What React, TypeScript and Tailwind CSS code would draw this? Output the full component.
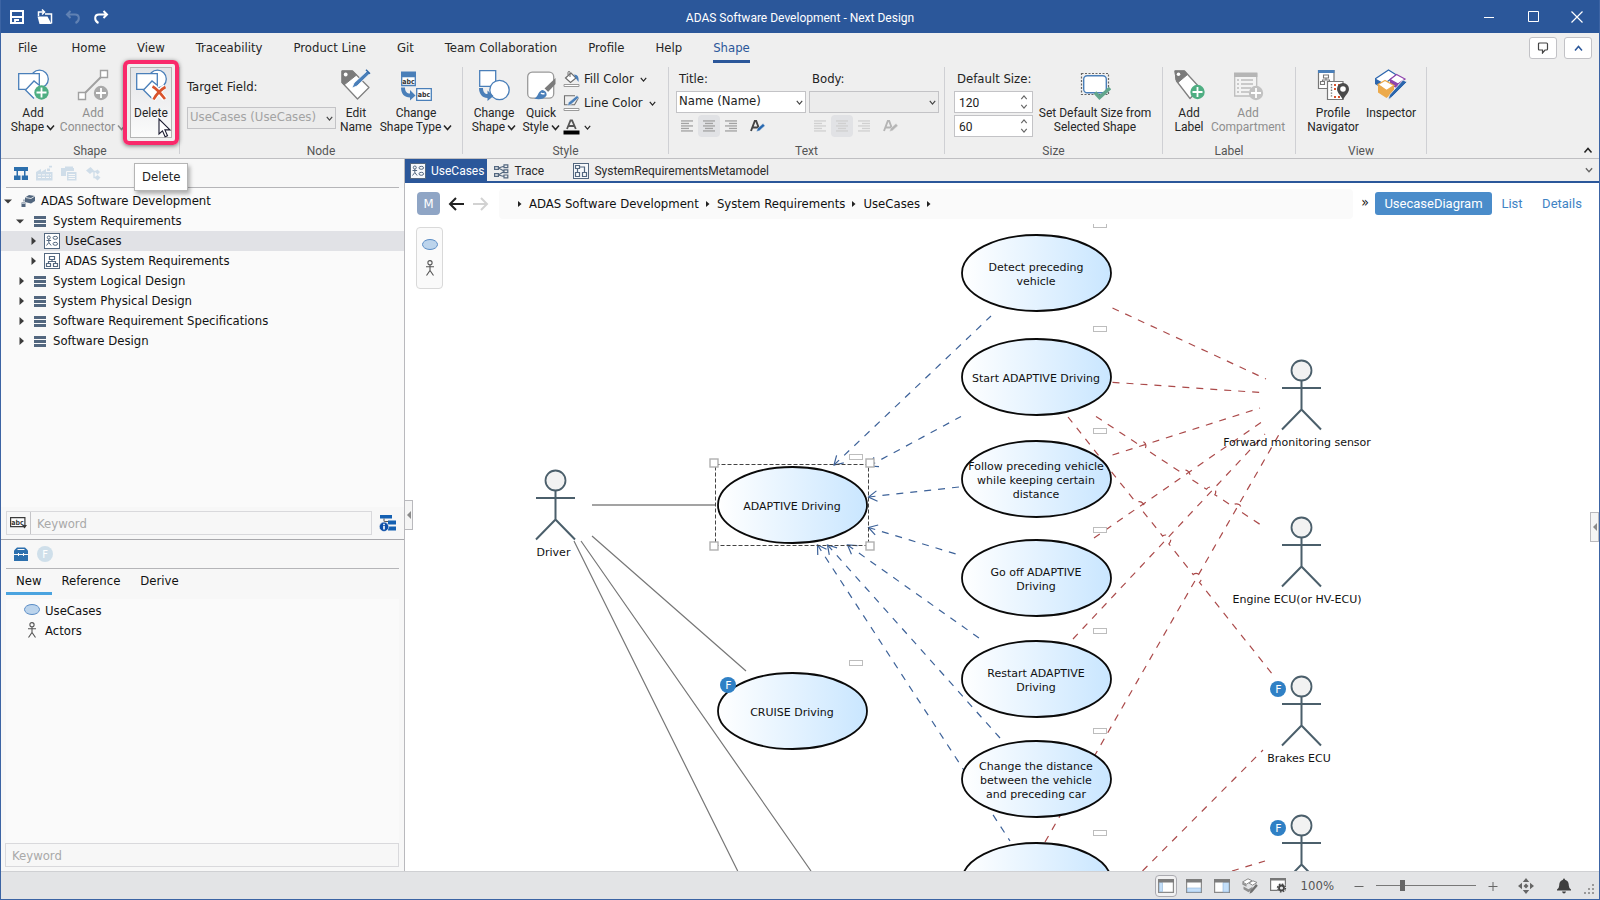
import React from "react";

const BLUE = "#4a7fb9";

/* ---------- small glyphs ---------- */

function Chevron({ up = false, className = "" }: { up?: boolean; className?: string }) {
  return (
    <svg width="9" height="9" viewBox="0 0 9 9" className={className} fill="none" stroke="currentColor" strokeWidth="1.5" aria-hidden="true">
      <path d={up ? "M1 6.5 4.5 2.5 8 6.5" : "M1 2.5 4.5 6.5 8 2.5"} />
    </svg>
  );
}

function PlusBadge({ x, y, color }: { x: number; y: number; color: string }) {
  return (
    <g>
      <circle cx={x} cy={y} r="7.2" fill={color} />
      <path d={`M${x - 5} ${y}h10M${x} ${y - 5}v10`} stroke="#fff" strokeWidth="1.8" />
    </g>
  );
}

function Icon32({ children }: { children: React.ReactNode }) {
  return (
    <svg width="32" height="32" viewBox="0 0 32 32" fill="none" className="shrink-0" aria-hidden="true">
      {children}
    </svg>
  );
}

function Shapes() {
  return (
    <g stroke={BLUE} strokeWidth="1.3" fill="#fff">
      <circle cx="22.5" cy="10" r="8.8" />
      <path d="M1.7 4.7h20.6v15.6H1.7z" />
      <path d="M8.5 20.5 17 12l8.5 8.5L17 29z" stroke="none" />
      <path d="M22 16 17 12 8.5 21 17 29.5" fill="none" />
    </g>
  );
}

function AddShapeIcon() {
  return (
    <Icon32>
      <Shapes />
      <PlusBadge x={24.5} y={23.5} color="#4fae82" />
    </Icon32>
  );
}

function DeleteIcon() {
  return (
    <Icon32>
      <Shapes />
      <path d="M18 18c3 2 9 9 12 12M30 17.5c-4 3-9 8-12 13" stroke="#fff" strokeWidth="5" />
      <path d="M17.5 17.5c4 2 9 8 12.5 12.5M30.5 18c-4.5 2.5-9 7-12 12.5" stroke="#d9532c" strokeWidth="2.6" />
    </Icon32>
  );
}

function AddConnectorIcon() {
  return (
    <Icon32>
      <g stroke="#a0a0a0" strokeWidth="1.4">
        <path d="M8.5 23.5 23.5 8.5" strokeWidth="2" />
        <path d="M1.5 23.5h7v7h-7zM23.5 1.5h7v7h-7z" fill="#fff" />
      </g>
      <PlusBadge x={24} y={24} color="#a9a9a9" />
    </Icon32>
  );
}

function EditNameIcon() {
  return (
    <Icon32>
      <path d="M2 2h10.5L29 18.5 17.5 30 2 13.5z" fill="#fff" stroke="#808080" strokeWidth="1.3" strokeLinejoin="round" />
      <path d="M2 2h10.5l4 4L4 16l-2-2.5z" fill="#7b7b7b" stroke="#7b7b7b" strokeLinejoin="round" />
      <circle cx="5.7" cy="5.5" r="1.9" fill="#fff" />
      <path d="M12 19l2-5L27.5 1.5l2.5 3L17 17z" fill={BLUE} stroke="#fff" strokeWidth=".8" />
      <path d="M26 .8l4 4" stroke="#2f66a5" strokeWidth="1.4" />
    </Icon32>
  );
}

function ChangeShapeTypeIcon() {
  return (
    <Icon32>
      <path d="M1 2.5h15v5H1z" fill={BLUE} />
      <path d="M1.7 7.5h13.6v9H1.7z" fill="#fff" stroke={BLUE} strokeWidth="1.3" />
      <path d="M16.7 19.7h14.6v11.6H16.7z" fill="#fff" stroke={BLUE} strokeWidth="1.3" />
      <text x="8.5" y="14.5" fontSize="7" fontWeight="700" fill="#333" textAnchor="middle">abc</text>
      <text x="24" y="27.8" fontSize="7" fontWeight="700" fill="#333" textAnchor="middle">abc</text>
      <path d="M1 18.5h4c0 4 2 6 5 6v-3.5l5.5 5.5-5.5 5v-3C4.5 28.5 1 25 1 18.5z" fill={BLUE} />
    </Icon32>
  );
}

function ChangeShapeIcon() {
  return (
    <Icon32>
      <path d="M1.7 1.7h16v15.6h-16z" fill="#fff" stroke={BLUE} strokeWidth="1.3" />
      <circle cx="21.5" cy="21" r="9.7" fill="#fff" stroke={BLUE} strokeWidth="1.3" />
      <path d="M1 19h4c0 4 2 6 4.5 6v-3.5L15.5 27 9.5 32v-3C4.5 29 1 25 1 19z" fill={BLUE} />
    </Icon32>
  );
}

function QuickStyleIcon() {
  return (
    <Icon32>
      <rect x="2.7" y="3.2" width="26" height="26" rx="4.5" fill="#fff" stroke="#9a9a9a" strokeWidth="1.3" />
      <path d="M30.5 9v6L23 23l-3.5-3.5z" fill="#7b7b7b" />
      <path d="M19 20l3.5 3.5" stroke="#fff" strokeWidth="1.2" />
      <path d="M9 29.5c4-1 3.5-6.5 8-8.5 3.5.5 5 3 4.5 5.5-2.5 4-8 4.5-12.5 3z" fill={BLUE} />
      <path d="M16 24c1 1 2 1 3.5.5" stroke="#fff" strokeWidth="1.5" />
    </Icon32>
  );
}

function SetSizeIcon() {
  return (
    <Icon32>
      <path d="M2.5 4.5h27v21h-27z" stroke="#666" strokeWidth="1.2" strokeDasharray="2 1.5" />
      <rect x="4.7" y="6.7" width="22.6" height="17" rx="3.5" fill="#fff" stroke={BLUE} strokeWidth="1.4" />
      <path d="M16 23.5l4.5 5L31 19" stroke="#62a68c" strokeWidth="3.6" />
    </Icon32>
  );
}

function AddLabelIcon() {
  return (
    <Icon32>
      <path d="M2 2h9.5L27 19 17 29.5 3.5 12z" fill="#fff" stroke="#808080" strokeWidth="1.3" strokeLinejoin="round" />
      <path d="M2 2h9.5l3 3.5L5 13.5 3 11z" fill="#7b7b7b" stroke="#7b7b7b" strokeLinejoin="round" />
      <circle cx="5.5" cy="5.2" r="1.8" fill="#fff" />
      <PlusBadge x={24.5} y={23} color="#4fae82" />
    </Icon32>
  );
}

function AddCompartmentIcon() {
  return (
    <Icon32>
      <path d="M2.7 5h22v22h-22z" fill="#f3f3f3" stroke="#bdbdbd" strokeWidth="1.3" />
      <path d="M2 3.5h23.4V8H2z" fill="#b5b5b5" />
      <path d="M5 11h2M5 15h2M5 19h2M5 23h2M9 11h12M9 15h12M9 19h10M9 23h8" stroke="#bdbdbd" strokeWidth="1.4" />
      <PlusBadge x={24} y={24} color="#c2c2c2" />
    </Icon32>
  );
}

function ProfileNavigatorIcon() {
  return (
    <Icon32>
      <path d="M1.5 1.5h15.5v18H1.5z" fill="#fff" stroke="#777" strokeWidth="1.2" />
      <path d="M1 1h16.5v3H1z" fill={BLUE} />
      <path d="M6.5 6h5v3h-5zM3.5 12.5h4v3h-4zM10.5 12.5h4v3h-4zM9 9v2M5.5 12.5V11h7v1.5" stroke="#777" strokeWidth="1.1" />
      <path d="M10.5 12.5h15.5v18H10.5z" fill="#fff" stroke="#777" strokeWidth="1.2" />
      <path d="M14.5 15v14" stroke="#777" strokeWidth="1.4" strokeDasharray="1.4 1.4" />
      <path d="M18 15v2M18 19v2M18 27v2M22 15v2M22 27v2" stroke="#d9532c" strokeWidth="2" />
      <path d="M26 14a6 6 0 0 1 6 6c0 4-4.5 7-6 11-1.5-4-6-7-6-11a6 6 0 0 1 6-6z" fill="#4a4a4a" />
      <circle cx="26" cy="20" r="2.8" fill="#fff" />
    </Icon32>
  );
}

function InspectorIcon() {
  return (
    <Icon32>
      <path d="M0 10 13.5 1l8 5L9 15z" fill="#fff" stroke="#2c66ad" strokeWidth="1.2" />
      <path d="M0 10l9 5.5v5L0 15z" fill="#2c66ad" />
      <path d="M15 10.5 21.5 5.5l8.5 4.5-7 5z" fill="#fff" stroke="#8e44ad" strokeWidth="1.2" />
      <path d="M15 10.5l8 4.5v5l-8-4.5z" fill="#8e44ad" />
      <path d="M3 15.5l7-4 9 5-7.5 5z" fill="#fff" stroke="#ecaa4c" strokeWidth="1.2" />
      <path d="M3 15.5l8.500 6 7.5-5V23l-7.5 6L3 23.5z" fill="#ecaa4c" />
      <path d="M28 11l4 2-15 15-4 3 1.5-5z" fill="#2c66ad" stroke="#efefef" strokeWidth=".8" />
    </Icon32>
  );
}

function PenLetter({ muted = false }: { muted?: boolean }) {
  return (
    <svg width="16" height="14" viewBox="0 0 16 14" aria-hidden="true">
      <path d="M1 12 4.8 2h1.4L9.5 11M2.5 8.5h5.5" stroke={muted ? "#b5b5b5" : "#444"} strokeWidth="1.9" fill="none" />
      <path d="M6.5 12.5l1-3 5.5-5 2 2.2-5.5 5z" fill={muted ? "#b5b5b5" : "#2768b0"} stroke="#efefef" strokeWidth=".5" />
    </svg>
  );
}

function AlignGlyph({ kind, muted }: { kind: "left" | "center" | "right"; muted?: boolean }) {
  const rows = [12, 8, 12, 8, 12];
  return (
    <svg width="12" height="12" viewBox="0 0 12 12" aria-hidden="true">
      {rows.map((w, i) => (
        <rect key={i} x={kind === "left" ? 0 : kind === "center" ? (12 - w) / 2 : 12 - w} y={i * 2.5 + 0.3} width={w} height="1.3" fill={muted ? "#d0d0d0" : "#a2a2a2"} />
      ))}
    </svg>
  );
}

function UseCaseDocIcon({ light = false }: { light?: boolean }) {
  return (
    <svg width="16" height="16" viewBox="0 0 16 16" fill="none" stroke="#53677f" strokeWidth="1" className="shrink-0" aria-hidden="true">
      <rect x=".5" y=".5" width="15" height="15" fill={light ? "#fff" : "#f7f9fb"} />
      <circle cx="4.8" cy="4.5" r="1.5" />
      <path d="M4.8 6v3.5M2.5 7.5h4.6M2.5 12.5l2.3-3 2.3 3" />
      <ellipse cx="11.3" cy="4.8" rx="2.3" ry="1.5" />
      <ellipse cx="11.3" cy="10.8" rx="2.3" ry="1.5" />
    </svg>
  );
}

function ModelDocIcon() {
  return (
    <svg width="16" height="16" viewBox="0 0 16 16" fill="none" stroke="#53677f" strokeWidth="1" aria-hidden="true">
      <rect x=".5" y=".5" width="15" height="15" fill="#fff" />
      <path d="M5.5 3.5h5v3h-5zM2.5 10.5h4v3h-4zM9.5 10.5h4v3h-4zM8 6.5v2M4.5 10.5v-2h7v2" strokeWidth="1.2" />
    </svg>
  );
}

function MetamodelDocIcon() {
  return (
    <svg width="16" height="16" viewBox="0 0 16 16" fill="none" stroke="#53677f" strokeWidth="1" aria-hidden="true">
      <rect x=".5" y=".5" width="15" height="15" fill="#f7f9fb" />
      <path d="M2.5 2.5h4v3h-4zM2.5 9.5h4v4h-4zM9.5 9.5h4v4h-4zM4.5 5.5v4M6.5 4h5v5.5" strokeWidth="1.2" />
    </svg>
  );
}

function TraceDocIcon() {
  return (
    <svg width="15" height="15" viewBox="0 0 15 15" fill="none" stroke="#53677f" strokeWidth="1.2" aria-hidden="true">
      <path d="M.6 2.6h3.8v2.8H.6zM.6 9.600h3.8v2.8H.6zM10 .8h3.8v2.8H10zM10 5.8h3.8v2.8H10zM10 11h3.8v2.8H10zM4.4 4 10 7M4.4 4 10 2.2M4.4 11 10 7.5M4.4 11l5.600 1.5" />
    </svg>
  );
}

function Bars() {
  return (
    <svg width="12" height="12" viewBox="0 0 12 12" fill="#53677f" aria-hidden="true">
      <path d="M0 1h12v3H0zM0 5h12v3H0zM0 9h12v3H0z" />
    </svg>
  );
}

function ProjectIcon() {
  return (
    <svg width="16" height="16" viewBox="0 0 16 16" aria-hidden="true">
      <path d="M5 4.500 9 2l6 1v5l-4 2.500L5 9z" fill="#53677f" />
      <path d="M5.500 4.500 11 5.500 15 3" stroke="#fff" strokeWidth=".8" fill="none" />
      <path d="M1.500 9.500h4V14h-4z" fill="#53677f" />
      <path d="M1.500 10.500h4" stroke="#cfd6de" strokeWidth=".8" />
      <path d="M4 8.500V6.500" stroke="#53677f" />
    </svg>
  );
}

function OvalGlyph() {
  return (
    <svg width="16" height="16" viewBox="0 0 16 16" aria-hidden="true">
      <ellipse cx="8" cy="7.5" rx="7.5" ry="5" fill="#bcd4ec" stroke="#5a8cc5" />
    </svg>
  );
}

function ActorGlyph() {
  return (
    <svg width="16" height="16" viewBox="0 0 16 16" fill="none" stroke="#555" strokeWidth="1.1" aria-hidden="true">
      <circle cx="8" cy="2.7" r="2.1" />
      <path d="M8 5v5.5M4 6.7h8M4.5 15.5l3.5-5 3.5 5" />
    </svg>
  );
}

/* ---------- ribbon ---------- */

function RibbonButton(props: {
  icon: React.ReactNode;
  lines: string[];
  width: string;
  menu?: boolean;
  disabled?: boolean;
  className?: string;
  children?: React.ReactNode;
}) {
  const { icon, lines, width, menu, disabled, className = "", children } = props;
  return (
    <button
      type="button"
      disabled={disabled}
      className={`relative flex shrink-0 flex-col items-center whitespace-nowrap ${width} ${disabled ? "text-[#8e8e8e]" : "text-[#262626]"} ${className}`}
    >
      {icon}
      <span className="mt-[5px] flex flex-col items-center font-[Roboto,sans-serif] text-[12px] leading-[14px]">
        {lines.map((l, i) => (
          <span key={l} className="flex items-center gap-0.5">
            {l}
            {menu && i === lines.length - 1 && <Chevron />}
          </span>
        ))}
      </span>
      {children}
    </button>
  );
}

function Group({ title, width, children }: { title: string; width: string; children: React.ReactNode }) {
  return (
    <>
      <section aria-label={title} className={`flex shrink-0 flex-col ${width}`}>
        <div className="flex h-[77px] items-start">{children}</div>
        <div className="text-center font-[Roboto,sans-serif] text-[12px] leading-[14px] text-[#555]">{title}</div>
      </section>
      <div className="h-[87px] w-px shrink-0 bg-[#cfd0d4]" />
    </>
  );
}

function Combo({ id, value, disabled, className }: { id: string; value: string; disabled?: boolean; className: string }) {
  return (
    <div className={`relative h-[22px] ${className}`}>
      <select
        id={id}
        disabled={disabled}
        className={`block h-full w-full appearance-none border border-[#c3c3c6] pr-4 pb-[3px] pl-0.5 text-[13px] leading-[17px] opacity-100 ${disabled ? "bg-[#ececec] text-[#a3a3a3]" : "bg-white text-[#1e1e1e]"}`}
      >
        <option>{value}</option>
      </select>
      <Chevron className="pointer-events-none absolute top-[8px] right-[3px] h-[7px] w-[7px] text-[#444]" />
    </div>
  );
}

function AlignRow({ muted, label }: { muted?: boolean; label: string }) {
  return (
    <div className="mt-0.5 flex">
      {(["left", "center", "right"] as const).map((k) => (
        <button
          key={k}
          type="button"
          aria-label={`${label} align ${k}`}
          className={`flex h-[22px] w-[22px] items-center justify-center rounded-sm ${k === "center" ? "bg-[#e1e2e5]" : ""}`}
        >
          <AlignGlyph kind={k} muted={muted} />
        </button>
      ))}
      <button type="button" aria-label={`${label} font`} className="ml-1 flex h-[22px] w-6 items-center justify-center">
        <PenLetter muted={muted} />
      </button>
    </div>
  );
}

function Spin({ id, value, label }: { id: string; value: string; label: string }) {
  return (
    <div className="mb-0.5 flex h-[22px] w-[79px] border border-[#c3c3c6] bg-white">
      <input id={id} aria-label={label} defaultValue={value} className="w-0 flex-1 pt-0.5 pl-1 font-[Roboto,sans-serif] text-[12px] text-[#222] outline-none" />
      <span className="flex w-4 flex-col items-center justify-between py-0.5 text-[#666]">
        <button type="button" aria-label={`Increase ${label}`}><Chevron up className="h-[7px] w-2" /></button>
        <button type="button" aria-label={`Decrease ${label}`}><Chevron className="h-[7px] w-2" /></button>
      </span>
    </div>
  );
}

function Ribbon() {
  return (
    <div className="relative flex h-24 shrink-0 border-b border-[#bfbfc2] pt-1">
      <Group title="Shape" width="w-[178px]">
        <RibbonButton icon={<AddShapeIcon />} lines={["Add", "Shape"]} menu width="w-[54px]" className="ml-[5px] pt-0.5" />
        <RibbonButton icon={<AddConnectorIcon />} lines={["Add", "Connector"]} menu disabled width="w-[66px]" className="pt-0.5" />
        <RibbonButton
          icon={<DeleteIcon />}
          lines={["Delete"]}
          width="w-[42px]"
          className="ml-1 h-[71px] border border-[#b4b4b4] bg-gradient-to-b from-[#e4e5e8] to-[#fbfbfb] pt-px"
        >
          <span className="pointer-events-none absolute -top-2 -right-2 -bottom-2 -left-2 rounded-md border-4 border-[#f9296b] shadow-[0_1px_4px_rgba(0,0,0,0.5)]" />
          <svg width="14" height="20" viewBox="0 0 14 20" className="absolute top-[50px] left-[27px]" aria-hidden="true">
            <path d="M1 1v15l3.5-3.2 2.6 5.9 2.4-1-2.6-5.8H12z" fill="#fff" stroke="#1b1b30" strokeWidth="1.1" />
          </svg>
        </RibbonButton>
      </Group>

      <Group title="Node" width="w-[282px]">
        <div className="ml-[7px] flex w-[149px] shrink-0 flex-col">
          <label htmlFor="target" className="flex h-10 items-center text-[13px] text-[#222]">Target Field:</label>
          <Combo id="target" value="UseCases (UseCases)" disabled className="w-full" />
        </div>
        <RibbonButton icon={<EditNameIcon />} lines={["Edit", "Name"]} width="w-[40px]" className="pt-0.5" />
        <RibbonButton icon={<ChangeShapeTypeIcon />} lines={["Change", "Shape Type"]} menu width="w-[80px]" className="pt-0.5" />
      </Group>

      <Group title="Style" width="w-[205px]">
        <RibbonButton icon={<ChangeShapeIcon />} lines={["Change", "Shape"]} menu width="w-[50px]" className="ml-1.5 pt-0.5" />
        <RibbonButton icon={<QuickStyleIcon />} lines={["Quick", "Style"]} menu width="w-[44px]" className="pt-0.5" />
        <div className="flex flex-col text-[13px] text-[#222]">
          <button type="button" className="flex h-6 items-center gap-1">
            <svg width="17" height="16" viewBox="0 0 17 16" aria-hidden="true">
              <path d="M2.5 7 8 2l5 5-5.5 4.5z" fill="#fff" stroke="#6e6e6e" strokeWidth="1.2" />
              <path d="M7 6V1.5C7 0 5 0 5 1.5V4" fill="none" stroke="#6e6e6e" />
              <path d="M11 3.5c4 0 5 3 4.5 7.5L13 7.5z" fill={BLUE} />
              <path d="M1 13.5h15v2H1z" fill="#fff" stroke="#9a9a9a" />
            </svg>
            Fill Color
            <Chevron className="ml-0.5 h-[7px] w-[7px]" />
          </button>
          <button type="button" className="flex h-6 items-center gap-1">
            <svg width="17" height="16" viewBox="0 0 17 16" aria-hidden="true">
              <path d="M12 .8H1.5v9h10l4-7" fill="none" stroke="#6e6e6e" strokeWidth="1.1" />
              <path d="M4.5 11l1-3.5L14 .5l2 2-8 7z" fill={BLUE} stroke="#efefef" strokeWidth=".6" />
              <path d="M1 13.5h15v2H1z" fill="#fff" stroke="#9a9a9a" />
            </svg>
            Line Color
            <Chevron className="ml-0.5 h-[7px] w-[7px]" />
          </button>
          <button type="button" aria-label="Font color" className="flex h-6 items-center gap-1">
            <svg width="17" height="16" viewBox="0 0 17 16" aria-hidden="true">
              <path d="M4 10 7.5 1.5h1.6L12.8 10M5.5 7h5.5" stroke="#555" strokeWidth="1.8" fill="none" />
              <path d="M.5 11.5h16v4H.5z" fill="#000" />
            </svg>
            <Chevron className="h-[7px] w-[7px]" />
          </button>
        </div>
      </Group>

      <Group title="Text" width="w-[275px]">
        <div className="ml-[7px] flex w-[130px] flex-col">
          <label htmlFor="title" className="flex h-6 items-center pl-[3px] text-[13px] text-[#222]">Title:</label>
          <Combo id="title" value="Name (Name)" className="w-full" />
          <AlignRow label="Title" />
        </div>
        <div className="ml-[3px] flex w-[130px] flex-col">
          <label htmlFor="body" className="flex h-6 items-center pl-[3px] text-[13px] text-[#222]">Body:</label>
          <Combo id="body" value="" disabled className="w-full" />
          <AlignRow label="Body" muted />
        </div>
      </Group>

      <Group title="Size" width="w-[217px]">
        <div className="ml-[9px] flex flex-col">
          <label htmlFor="size-w" className="flex h-6 items-center pl-[3px] text-[13px] whitespace-nowrap text-[#222]">Default Size:</label>
          <Spin id="size-w" label="Default width" value="120" />
          <Spin id="size-h" label="Default height" value="60" />
        </div>
        <RibbonButton icon={<SetSizeIcon />} lines={["Set Default Size from", "Selected Shape"]} width="w-[124px]" className="pt-0.5" />
      </Group>

      <Group title="Label" width="w-[132px]">
        <RibbonButton icon={<AddLabelIcon />} lines={["Add", "Label"]} width="w-[38px]" className="ml-[7px] pt-0.5" />
        <RibbonButton icon={<AddCompartmentIcon />} lines={["Add", "Compartment"]} disabled width="w-[80px]" className="pt-0.5" />
      </Group>

      <Group title="View" width="w-[130px]">
        <RibbonButton icon={<ProfileNavigatorIcon />} lines={["Profile", "Navigator"]} width="w-[64px]" className="ml-[5px] pt-0.5" />
        <RibbonButton icon={<InspectorIcon />} lines={["Inspector"]} width="w-[52px]" className="pt-0.5" />
      </Group>

      <button type="button" aria-label="Collapse ribbon" className="mt-auto mr-1.5 mb-[3px] ml-auto text-[#222]">
        <Chevron up className="h-[9px] w-2.5" />
      </button>
    </div>
  );
}

/* ---------- left panel ---------- */

type TreeNode = { text: string; level: number; open?: boolean; icon: React.ReactNode; selected?: boolean };
const TREE: TreeNode[] = [
  { text: "ADAS Software Development", level: 0, open: true, icon: <ProjectIcon /> },
  { text: "System Requirements", level: 1, open: true, icon: <Bars /> },
  { text: "UseCases", level: 2, icon: <UseCaseDocIcon light />, selected: true },
  { text: "ADAS System Requirements", level: 2, icon: <ModelDocIcon /> },
  { text: "System Logical Design", level: 1, icon: <Bars /> },
  { text: "System Physical Design", level: 1, icon: <Bars /> },
  { text: "Software Requirement Specifications", level: 1, icon: <Bars /> },
  { text: "Software Design", level: 1, icon: <Bars /> },
];
const INDENT = ["pl-0", "pl-3", "pl-6"];

function LeftPanel() {
  return (
    <aside className="flex w-[404px] shrink-0 flex-col border-r border-[#b9b9bd] bg-[#f7f7f7]">
      <div className="flex min-h-0 flex-[383] flex-col border-b border-[#a8a8ac]">
        <div className="mr-[5px] ml-[5px] flex h-[29px] shrink-0 items-center gap-2 border-b border-[#b5b5b8] pl-2">
          <button type="button" aria-label="Model tree">
            <svg width="14" height="13" viewBox="0 0 14 13" fill="#2c6fad" aria-hidden="true">
              <path d="M0 0h14v4H0zM2.5 4h1.5v5H2.5zM10 4h1.5v5H10zM0 8.5h6.5V13H0zM7.8 8.5H14V13H7.8z" />
            </svg>
          </button>
          <button type="button" aria-label="Product line">
            <svg width="17" height="16" viewBox="0 0 17 16" fill="#cfdde9" aria-hidden="true">
              <path d="M0 15.5V7l5-3v3l5-3v3h6.5v8.5zM11 3.5h3V6h-3zM13 .8h3V2.5h-3z" />
              <path d="M2 9.8h13M2 12.5h13" stroke="#f7f7f7" strokeDasharray="3 1" />
            </svg>
          </button>
          <button type="button" aria-label="Views">
            <svg width="16" height="15" viewBox="0 0 16 15" fill="#cfdde9" aria-hidden="true">
              <path d="M0 2h4V.5h8V2h1v8H0z" />
              <path d="M5.5 5.5H16V15H5.5z" stroke="#f7f7f7" />
              <path d="M7.5 8.5H14M7.5 10.5H14M7.5 12.5H14" stroke="#f7f7f7" />
            </svg>
          </button>
          <button type="button" aria-label="Relations" className="ml-px">
            <svg width="15" height="15" viewBox="0 0 15 15" fill="#cfdde9" aria-hidden="true">
              <path d="M0 4.500 4.500 1 8 4.500 4 8zM9 5.500l2.500-2L14 6l-2.500 2.500zM8.500 11.500l3-2.500 3 2.500-3 3z" />
              <path d="M6 5.500h5M8 5.500v6h3" stroke="#cfdde9" fill="none" strokeWidth="1.3" />
            </svg>
          </button>
        </div>
        <ul className="min-h-0 flex-1 overflow-hidden bg-[#fafafa] pt-[3px] text-[13px] text-[#111]">
          {TREE.map((n) => (
            <li key={n.text} className={`flex h-5 items-center gap-[5px] ${INDENT[n.level]} ${n.selected ? "bg-[#e1e2e6]" : ""}`}>
              <button type="button" aria-label={n.open ? "Collapse" : "Expand"} className="flex w-3.5 justify-center">
                <svg width="10" height="8" viewBox="0 0 10 8" fill="#3c3c3c" aria-hidden="true">
                  <path d={n.open ? "M1 2.5h8L5 6.500z" : "M4.500 0v8l4.500-4z"} />
                </svg>
              </button>
              <span className="flex w-4 justify-center">{n.icon}</span>
              <span>{n.text}</span>
            </li>
          ))}
        </ul>
        <div className="flex h-8 shrink-0 items-center px-[5px]">
          <div className="flex h-6 flex-1 items-center border border-[#d9d9dc]">
            <button type="button" aria-label="Search mode" className="flex h-full w-6 items-center justify-center border-r border-[#c5c5c8]">
              <svg width="17" height="12" viewBox="0 0 17 12" aria-hidden="true">
                <path d="M.6.6h14.300v9H.6z" fill="#fff" stroke="#3a3a3a" strokeWidth="1.2" />
                <text x="7.6" y="7.5" fontSize="7" fontWeight="700" fill="#3a3a3a" textAnchor="middle">abc</text>
                <path d="M12 8h5l-2.5 3.500z" fill="#3a3a3a" />
              </svg>
            </button>
            <input aria-label="Search tree" placeholder="Keyword" className="h-full flex-1 px-1.5 text-[13px] outline-none placeholder:text-[#a9a9a9]" />
          </div>
          <button type="button" aria-label="Filter settings" className="ml-[7px] mr-[3px]">
            <svg width="17" height="17" viewBox="0 0 17 17" aria-hidden="true">
              <path d="M1 0h12v3.500H1zM9 5.500h8v4H9zM9 11.500h8v4H9z" fill="#1460b2" />
              <path d="M5 3.500v3M5 6.500h4" stroke="#555" />
              <circle cx="5" cy="11.800" r="4.700" fill="#0d4fa8" stroke="#f7f7f7" strokeWidth=".6" />
              <path d="M5 8.800v1.500M5 11v3.500" stroke="#fff" strokeWidth="1.600" />
            </svg>
          </button>
        </div>
      </div>

      <div className="flex min-h-0 flex-[329] flex-col px-[5px] pb-1">
        <div className="flex h-[29px] shrink-0 items-center gap-[9px] border-b border-[#b5b5b8] pl-2">
          <button type="button" aria-label="Toolbox">
            <svg width="14" height="14" viewBox="0 0 14 14" aria-hidden="true">
              <path d="M3 .5h8l3 3V14H0V3.500z" fill="#2c6fad" />
              <path d="M3.500 2.500h7M0 7.500h14M4.500 6v3M9.500 6v3" stroke="#f7f7f7" />
            </svg>
          </button>
          <button type="button" aria-label="Feature" className="flex h-4 w-4 items-center justify-center rounded-full bg-[#cfdfea] text-[11px] leading-none text-white">F</button>
        </div>
        <div role="tablist" className="flex h-[26px] shrink-0 text-[13px] text-[#111]">
          <button type="button" role="tab" aria-selected="true" className="border-b-[3px] border-[#4aa3df] px-2.5">New</button>
          <button type="button" role="tab" aria-selected="false" className="border-b-[3px] border-transparent px-2.5">Reference</button>
          <button type="button" role="tab" aria-selected="false" className="border-b-[3px] border-transparent px-2.5">Derive</button>
        </div>
        <ul className="mt-1 min-h-0 flex-1 bg-[#fafafa] pt-px text-[13px] text-[#111]">
          <li className="flex h-5 items-center gap-[5px] pl-[18px]"><OvalGlyph />UseCases</li>
          <li className="flex h-5 items-center gap-[5px] pl-[18px]"><ActorGlyph />Actors</li>
        </ul>
        <input aria-label="Search toolbox" placeholder="Keyword" className="-ml-px h-6 shrink-0 border border-[#d9d9dc] px-1.5 text-[13px] outline-none placeholder:text-[#a9a9a9]" />
      </div>
    </aside>
  );
}

/* ---------- diagram ---------- */

const CASES: { x: number; y: number; lines: string[] }[] = [
  { x: 1036.5, y: 273, lines: ["Detect preceding", "vehicle"] },
  { x: 1036.5, y: 377, lines: ["Start ADAPTIVE Driving"] },
  { x: 1036.5, y: 479, lines: ["Follow preceding vehicle", "while keeping certain", "distance"] },
  { x: 1036.5, y: 578, lines: ["Go off ADAPTIVE", "Driving"] },
  { x: 1036.5, y: 679, lines: ["Restart ADAPTIVE", "Driving"] },
  { x: 1036.5, y: 779, lines: ["Change the distance", "between the vehicle", "and preceding car"] },
  { x: 1036.5, y: 881, lines: [] },
  { x: 792.5, y: 505, lines: ["ADAPTIVE Driving"] },
  { x: 792.5, y: 711, lines: ["CRUISE Driving"] },
];

const ACTORS = [
  { x: 555.5, y: 480.5, tx: 553.5, name: "Driver" },
  { x: 1301.5, y: 370.5, tx: 1297, name: "Forward monitoring sensor" },
  { x: 1301.5, y: 527.5, tx: 1297, name: "Engine ECU(or HV-ECU)" },
  { x: 1301.5, y: 686.5, tx: 1299, name: "Brakes ECU" },
  { x: 1301.5, y: 825.5, tx: 1299, name: "" },
];

type Seg = [number, number, number, number];
const ARROWS: Seg[] = [
  [991, 316, 834, 465],
  [961, 416.5, 869, 466],
  [959, 487, 868.5, 497],
  [956, 554, 868.5, 527.5],
  [979, 638, 847.5, 545],
  [1000, 738, 827.5, 545],
  [1010, 841, 817.5, 545],
];
const RED: Seg[] = [
  [1112.5, 308, 1266, 379],
  [1112.5, 382.3, 1260, 392.5],
  [1112.5, 455, 1260, 408],
  [1094, 538, 1266, 419],
  [1073, 639, 1265, 434],
  [1045, 842, 1281, 431],
  [1142.5, 871, 1263, 750],
  [1232, 871, 1265, 861],
];
/* these hop over every RED line they cross */
const HOPPING: Seg[] = [
  [1096, 416.5, 1264, 527],
  [1068, 417, 1273, 675],
];

function cross(a: Seg, b: Seg): number | null {
  const [x1, y1, x2, y2] = a;
  const [x3, y3, x4, y4] = b;
  const d = (x2 - x1) * (y4 - y3) - (y2 - y1) * (x4 - x3);
  if (Math.abs(d) < 1e-6) return null;
  const t = ((x3 - x1) * (y4 - y3) - (y3 - y1) * (x4 - x3)) / d;
  const u = ((x3 - x1) * (y2 - y1) - (y3 - y1) * (x2 - x1)) / d;
  return t > 0 && t < 1 && u > 0 && u < 1 ? t : null;
}

function hopPath(s: Seg): string {
  const [x1, y1, x2, y2] = s;
  const len = Math.hypot(x2 - x1, y2 - y1);
  const ux = (x2 - x1) / len;
  const uy = (y2 - y1) / len;
  const r = 5;
  const ts = RED.map((o) => cross(s, o)).filter((t): t is number => t !== null).sort((a, b) => a - b);
  let d = `M${x1} ${y1}`;
  for (const t of ts) {
    const cx = x1 + (x2 - x1) * t;
    const cy = y1 + (y2 - y1) * t;
    d += `L${cx - ux * r} ${cy - uy * r}A${r} ${r} 0 0 1 ${cx + ux * r} ${cy + uy * r}`;
  }
  return `${d}L${x2} ${y2}`;
}

function Arrow({ seg }: { seg: Seg }) {
  const [x1, y1, x2, y2] = seg;
  const a = Math.atan2(y1 - y2, x1 - x2);
  const p = (o: number) => `${x2 + 10 * Math.cos(a + o)} ${y2 + 10 * Math.sin(a + o)}`;
  return (
    <g stroke="#3d6299" strokeWidth="1.2" fill="none">
      <path d={`M${x2} ${y2}L${x1} ${y1}`} strokeDasharray="7 7" />
      <path d={`M${p(0.55)}L${x2} ${y2}L${p(-0.55)}`} />
    </g>
  );
}

function FBadge({ x, y }: { x: number; y: number }) {
  return (
    <g>
      <circle cx={x} cy={y} r="8" fill="#2f80c5" />
      <text x={x + 0.3} y={y + 4} fill="#fff" textAnchor="middle">F</text>
    </g>
  );
}

function Diagram() {
  return (
    <svg className="absolute inset-0 h-full w-full font-['DejaVu_Sans',sans-serif]" fontSize="11" fill="#111" aria-label="Usecase diagram">
      <defs>
        <linearGradient id="oval" x1="0" x2="1" y1="0" y2="0">
          <stop offset="0" stopColor="#ffffff" />
          <stop offset="1" stopColor="#c9e6ff" />
        </linearGradient>
      </defs>
      <g transform="translate(-405 -224)">
        <g stroke="#777" strokeWidth="1.2">
          <path d="M592 505H716" stroke="#a3a3a3" strokeWidth="2" />
          <path d="M592 536 746 671M574 541 737.700 871M581 541 811 871" />
        </g>
        {ARROWS.map((s, i) => <Arrow key={i} seg={s} />)}
        <g stroke="#ab4a4a" strokeWidth="1.2" strokeDasharray="7 7" fill="none">
          {RED.map((s, i) => <path key={i} d={`M${s[0]} ${s[1]}L${s[2]} ${s[3]}`} />)}
          {HOPPING.map((s, i) => <path key={i} d={hopPath(s)} />)}
        </g>
        {CASES.map((c) => (
          <g key={`${c.x}-${c.y}`}>
            <ellipse cx={c.x} cy={c.y} rx="74.5" ry="38" fill="url(#oval)" stroke="#0a0a0a" strokeWidth="1.8" />
            <text textAnchor="middle">
              {c.lines.map((l, i) => (
                <tspan key={l} x={c.x - 0.5} y={c.y + 5 + (i - (c.lines.length - 1) / 2) * 14}>{l}</tspan>
              ))}
            </text>
            <rect x={c.x + 57} y={c.y - 50.5} width="13" height="5" fill="#fff" stroke="#bdbdbd" />
          </g>
        ))}
        {ACTORS.map((a) => (
          <g key={a.y}>
            <g stroke="#4b5f6b" strokeWidth="2">
              <path d={`M${a.x} ${a.y + 10}v29M${a.x - 19.5} ${a.y + 17.5}h39M${a.x - 19.5} ${a.y + 59}l19.5 -20l19.5 20`} fill="none" />
              <circle cx={a.x} cy={a.y} r="10" fill="#f2f2f2" strokeWidth="1.8" />
            </g>
            <text x={a.tx} y={a.y + 75.5} textAnchor="middle">{a.name}</text>
          </g>
        ))}
        <FBadge x={728} y={685} />
        <FBadge x={1278} y={689} />
        <FBadge x={1278} y={828} />
        <rect x="715.5" y="464.5" width="153" height="81" fill="none" stroke="#444" strokeDasharray="4 2" />
        <g fill="#fff" stroke="#b0b0b0" strokeWidth="1.4">
          <rect x="710" y="459" width="8" height="8" />
          <rect x="866" y="459" width="8" height="8" />
          <rect x="710" y="542" width="8" height="8" />
          <rect x="866" y="542" width="8" height="8" />
        </g>
      </g>
    </svg>
  );
}

/* ---------- main area ---------- */

function CrumbMark() {
  return (
    <svg width="4" height="6" viewBox="0 0 4 6" fill="#222" aria-hidden="true">
      <path d="M0 0v6l3.5-3z" />
    </svg>
  );
}

function Workspace() {
  const crumbs = ["ADAS Software Development", "System Requirements", "UseCases"];
  return (
    <main className="relative flex min-w-0 flex-1 flex-col bg-white">
      <div role="tablist" className="flex h-6 shrink-0 items-stretch border-b-2 border-[#2b579a] bg-[#efefef] font-[Roboto,sans-serif] text-[12px] text-[#2b2b2b]">
        <button type="button" role="tab" aria-selected="true" className="flex items-center gap-[5px] bg-[#2b579a] pt-0.5 pr-[3px] pl-[5px] text-white"><UseCaseDocIcon />UseCases</button>
        <button type="button" role="tab" aria-selected="false" className="flex w-[79px] items-center gap-[5px] pt-0.5 pl-[7px]"><TraceDocIcon />Trace</button>
        <button type="button" role="tab" aria-selected="false" className="flex items-center gap-[5px] px-[7px] pt-0.5"><MetamodelDocIcon />SystemRequirementsMetamodel</button>
        <button type="button" aria-label="All tabs" className="mr-1.5 ml-auto text-[#666]"><Chevron className="h-2 w-2" /></button>
      </div>

      <div className="flex h-[41px] shrink-0 items-start pt-1.5 text-[13px] text-[#111]">
        <button type="button" aria-label="Model" className="mt-[3px] ml-3 h-[23px] w-[23px] rounded-sm bg-[#8fa5c5] text-[13px] leading-none text-white">M</button>
        <button type="button" aria-label="Back" className="mt-[7px] ml-2">
          <svg width="17" height="16" viewBox="0 0 17 16" fill="none" stroke="#222" strokeWidth="2" aria-hidden="true"><path d="M16 8H1.5M8 2 2 8 8 14" /></svg>
        </button>
        <button type="button" aria-label="Forward" className="mt-[7px] ml-[7px]">
          <svg width="17" height="16" viewBox="0 0 17 16" fill="none" stroke="#d2d2d2" strokeWidth="2" aria-hidden="true"><path d="M1 8h14.5M9 2 15 8 9 14" /></svg>
        </button>
        <nav aria-label="Breadcrumb" className="ml-2.5 flex h-[30px] flex-1 items-center gap-[7px] rounded bg-[#fafafa] pl-[19px]">
          {crumbs.map((c) => (
            <React.Fragment key={c}>
              <CrumbMark />
              <a href="#">{c}</a>
            </React.Fragment>
          ))}
          <CrumbMark />
        </nav>
        <button type="button" aria-label="More" className="ml-1.5 h-[26px] w-3 text-[14px]">»</button>
        <div className="mt-[3px] mr-[7px] ml-1 flex h-[23px] items-center font-[Roboto,sans-serif] text-[13px] text-[#3f83c4]">
          <button type="button" className="h-full w-[117px] rounded-[3px] bg-[#4a8cca] text-white">UsecaseDiagram</button>
          <button type="button" className="h-full w-10">List</button>
          <button type="button" className="h-full w-[60px]">Details</button>
        </div>
      </div>

      <div className="relative min-h-0 flex-1 overflow-hidden">
        <Diagram />
        <div className="absolute top-[3px] left-[11px] flex h-[62px] w-[27px] flex-col items-center gap-[7px] rounded-sm border border-[#d9d9d9] bg-[#fafafa] pt-[9px]">
          <button type="button" aria-label="Add use case"><OvalGlyph /></button>
          <button type="button" aria-label="Add actor"><ActorGlyph /></button>
        </div>
      </div>

      <button type="button" aria-label="Collapse left panel" className="absolute top-[341px] -left-px flex h-[30px] w-[9px] items-center justify-center border border-[#b9b9bd] bg-[#f5f5f5]">
        <svg width="4" height="8" viewBox="0 0 4 8" fill="#8a8a8a" aria-hidden="true"><path d="M4 0v8L0 4z" /></svg>
      </button>
      <button type="button" aria-label="Open right panel" className="absolute top-[353px] right-0 flex h-[30px] w-[9px] items-center justify-center border border-[#b9b9bd] bg-[#f5f5f5]">
        <svg width="4" height="8" viewBox="0 0 4 8" fill="#8a8a8a" aria-hidden="true"><path d="M4 0v8L0 4z" /></svg>
      </button>
    </main>
  );
}

/* ---------- window chrome ---------- */

function TitleBar() {
  return (
    <header className="relative flex h-[33px] shrink-0 items-center justify-between bg-[#2b579a] text-white">
      <div className="flex items-center gap-3 pl-2">
        <button type="button" aria-label="Save">
          <svg width="16" height="16" viewBox="0 0 16 16" fill="none" stroke="#fff" strokeWidth="2" aria-hidden="true">
            <path d="M2 2h12v12H2zM2 8h12" /><path d="M6 14v-3h4" strokeWidth="1.8" />
          </svg>
        </button>
        <button type="button" aria-label="Open">
          <svg width="16" height="16" viewBox="0 0 16 16" fill="none" stroke="#fff" strokeWidth="1.5" aria-hidden="true">
            <path d="M8 5h6.500v9.500" /><path d="M.5 7.500h10l4 7.500H2.500z" fill="#fff" stroke="none" /><path d="M1.500 7V3h6M5 .5 7.500 3 5 5.500" />
          </svg>
        </button>
        <button type="button" aria-label="Undo" disabled className="opacity-25">
          <svg width="16" height="16" viewBox="0 0 16 16" fill="none" stroke="#fff" strokeWidth="2" aria-hidden="true">
            <path d="M5.500 2 2 5.500l3.500 3.500M2 5.500H10c5 0 5 6.500.5 8.500" />
          </svg>
        </button>
        <button type="button" aria-label="Redo">
          <svg width="16" height="16" viewBox="0 0 16 16" fill="none" stroke="#fff" strokeWidth="2" aria-hidden="true">
            <path d="M10.500 2 14 5.500l-3.500 3.500M14 5.500H6c-5 0-5 6.500-.5 8.500" />
          </svg>
        </button>
      </div>
      <h1 className="pointer-events-none absolute inset-x-0 pt-0.5 text-center font-[Roboto,sans-serif] text-[12px]">ADAS Software Development - Next Design</h1>
      <div className="relative flex">
        <button type="button" aria-label="Minimize" className="flex h-8 w-11 items-center justify-center"><svg width="10" height="10" stroke="#fff" aria-hidden="true"><path d="M0 5.5h10" /></svg></button>
        <button type="button" aria-label="Maximize" className="flex h-8 w-11 items-center justify-center"><svg width="11" height="11" stroke="#fff" fill="none" aria-hidden="true"><path d="M.5.5h10v10H.5z" /></svg></button>
        <button type="button" aria-label="Close" className="flex h-8 w-11 items-center justify-center"><svg width="12" height="12" stroke="#fff" strokeWidth="1.2" aria-hidden="true"><path d="M.5.5l11 11M11.5.5l-11 11" /></svg></button>
      </div>
    </header>
  );
}

function MenuTabs() {
  const tabs = ["File", "Home", "View", "Traceability", "Product Line", "Git", "Team Collaboration", "Profile", "Help", "Shape"];
  return (
    <div className="flex h-[30px] shrink-0 items-start justify-between pr-[7px] text-[13px] text-[#262626]">
      <nav aria-label="Ribbon tabs" className="flex h-full gap-[31px] pl-[17px]">
        {tabs.map((t) => (
          <button key={t} type="button" className={`h-full border-b-[3px] pt-0.5 ${t === "File" ? "pr-[3px]" : ""} ${t === "Shape" ? "border-[#2b579a] text-[#2b579a]" : "border-transparent"}`}>{t}</button>
        ))}
      </nav>
      <div className="mt-1 flex gap-[7px]">
        <button type="button" aria-label="Feedback" className="flex h-[22px] w-7 items-center justify-center rounded-[3px] border border-[#c2c2c6] bg-white">
          <svg width="12" height="12" viewBox="0 0 12 12" fill="none" stroke="#444" strokeWidth="1.2" aria-hidden="true"><path d="M2.500 1h7q1 0 1 1v5q0 1-1 1H8L5.500 11V8H2.500Q1.500 8 1.500 7V2q0-1 1-1z" /></svg>
        </button>
        <button type="button" aria-label="Minimize ribbon" className="flex h-[22px] w-7 items-center justify-center rounded-[3px] border border-[#c2c2c6] bg-white text-[#2b579a]"><Chevron up /></button>
      </div>
    </div>
  );
}

function PaneIcon({ d }: { d: string }) {
  return (
    <svg width="16" height="14" viewBox="0 0 16 14" aria-hidden="true">
      <path d="M.6.6h14.8v12.8H.6z" fill="#fff" stroke="#8a8a8a" strokeWidth="1.2" />
      <path d={d} fill="#c4dff9" stroke="#8fb4d8" strokeWidth=".6" />
      <path d="M0 0h16v3.5H0z" fill="#7d7d7d" />
    </svg>
  );
}

function StatusBar() {
  return (
    <footer className="flex h-7 shrink-0 items-center border-t border-[#cfd0d3] bg-[#e3e4e6] text-[#555]">
      <div className="ml-auto flex items-center">
        <button type="button" aria-label="Left pane" className="flex h-[22px] w-[22px] items-center justify-center rounded-sm border border-[#aaaab0] bg-[#f1f1f2]"><PaneIcon d="M1.5 3.5h3v9h-3z" /></button>
        <button type="button" aria-label="Bottom pane" className="ml-[9px]"><PaneIcon d="M1.2 9h13.6v4H1.2z" /></button>
        <button type="button" aria-label="Right pane" className="ml-3"><PaneIcon d="M9 3.5h5.8v9.5H9z" /></button>
        <button type="button" aria-label="Inspector pane" className="ml-3">
          <svg width="16" height="16" viewBox="0 0 16 16" aria-hidden="true">
            <path d="M.5 4 6 .8l4 1.900L4.500 6.200z" fill="#fff" stroke="#8a8a8a" />
            <path d="M7 5l4-2.200 4 1.700-4.500 2.700z" fill="#fff" stroke="#8a8a8a" />
            <path d="M.3 4.500l4.200 2.200v2L.3 6.500zM1.500 8.500l5 2.800 4-2.500v2.800l-4 2.700-5-3z" fill="#8f8f8f" />
            <path d="M14 6l1.800 1.800L10 14.500l-2.500 1.200.8-2.700z" fill="#707070" />
          </svg>
        </button>
        <button type="button" aria-label="View settings" className="ml-3">
          <svg width="17" height="15" viewBox="0 0 17 15" aria-hidden="true">
            <path d="M.6.6h14.8v11.800H.6z" fill="#fff" stroke="#777" strokeWidth="1.2" /><path d="M0 0h16v2.500H0z" fill="#777" />
            <circle cx="11.500" cy="10" r="4.800" fill="#e3e4e6" />
            <circle cx="11.500" cy="10" r="2.500" fill="none" stroke="#444" strokeWidth="1.8" />
            <circle cx="11.500" cy="10" r="4" fill="none" stroke="#444" strokeWidth="1.3" strokeDasharray="1.5 1.640" />
          </svg>
        </button>
        <span className="ml-3.5 text-[13px]">100%</span>
        <button type="button" aria-label="Zoom out" className="ml-5"><svg width="10" height="10" stroke="#666" aria-hidden="true"><path d="M.5 5.5h9" /></svg></button>
        <input
          type="range"
          aria-label="Zoom"
          defaultValue={25}
          className="ml-3 h-3 w-[100px] appearance-none bg-transparent [&::-webkit-slider-runnable-track]:h-px [&::-webkit-slider-runnable-track]:bg-[#777] [&::-webkit-slider-thumb]:-mt-[5px] [&::-webkit-slider-thumb]:h-[11px] [&::-webkit-slider-thumb]:w-[5px] [&::-webkit-slider-thumb]:appearance-none [&::-webkit-slider-thumb]:bg-[#666]"
        />
        <button type="button" aria-label="Zoom in" className="ml-3"><svg width="10" height="10" stroke="#666" aria-hidden="true"><path d="M.5 5.5h9M5 1v9" /></svg></button>
        <button type="button" aria-label="Fit" className="ml-5">
          <svg width="16" height="16" viewBox="0 0 16 16" fill="#666" aria-hidden="true"><path d="M8 0l3.2 4H4.8zM8 16l3.2-4H4.8zM0 8l4-3.2v6.400zM16 8l-4-3.200v6.400zM8 5.500 10.500 8 8 10.500 5.500 8z" /></svg>
        </button>
        <button type="button" aria-label="Notifications" className="ml-[22px]">
          <svg width="16" height="16" viewBox="0 0 16 16" fill="#3f3f3f" aria-hidden="true"><path d="M8 .5q1 0 1 1.200C12 2.500 12.800 5 12.800 7.500q0 2.500 2.200 4V12.500H1V11.500q2.200-1.500 2.200-4C3.200 5 4 2.500 7 1.700Q7 .5 8 .5zM6 13.500h4q-.5 2-2 2t-2-2z" /></svg>
        </button>
        <svg width="11" height="11" viewBox="0 0 11 11" fill="#9a9a9a" className="mt-2 mr-1 ml-3" aria-hidden="true"><path d="M8 0h2v2H8zM8 4h2v2H8zM8 8h2v2H8zM4 4h2v2H4zM4 8h2v2H4zM0 8h2v2H0z" /></svg>
      </div>
    </footer>
  );
}

export default function App() {
  return (
    <div className="relative flex h-screen flex-col overflow-hidden border-x border-b border-[#3c64a4] bg-[#efefef] font-['DejaVu_Sans_Condensed','DejaVu_Sans',sans-serif]">
      <TitleBar />
      <MenuTabs />
      <Ribbon />
      <div className="flex min-h-0 flex-1">
        <LeftPanel />
        <Workspace />
      </div>
      <StatusBar />
      <div role="tooltip" className="absolute top-[163px] left-[133px] border border-[#b5b5b5] bg-white px-[7px] py-[3px] text-[13px] leading-5 text-[#222] shadow-[2px_3px_4px_rgba(0,0,0,0.3)]">Delete</div>
    </div>
  );
}
